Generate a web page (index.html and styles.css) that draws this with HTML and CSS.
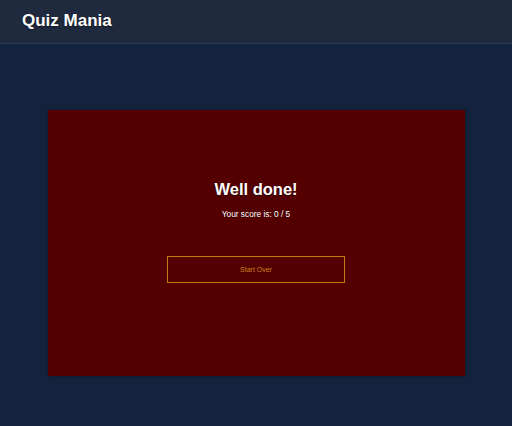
FILE: index.html
```html
<!DOCTYPE html>
<html>
<head>
<meta charset="utf-8">
<link rel="stylesheet" href="styles.css">
</head>
<body>
<header class="topbar"><h1 class="brand">Quiz Mania</h1></header>
<main class="main">
  <section class="card">
    <h2 class="result-title">Well done!</h2>
    <p class="score">Your score is: 0 / 5</p>
    <button class="restart">Start Over</button>
  </section>
</main>
</body>
</html>
```
FILE: styles.css
```css
html, body { margin: 0; padding: 0; }
body {
  background: #13223d;
  font-family: "Liberation Sans", Arial, sans-serif;
  color: #fff;
  width: 512px;
  height: 426px;
  overflow: hidden;
}
.topbar {
  height: 43px;
  background: #1f2a3e;
  border-bottom: 1px solid #2a3852;
  display: flex;
  align-items: center;
  padding-left: 22px;
  box-sizing: content-box;
}
.brand {
  margin: 0;
  font-size: 17px;
  font-weight: bold;
  line-height: 22px;
  padding-bottom: 1px;
  text-shadow: 0 1px 2px rgba(0,0,0,0.5);
}
.main {
  display: flex;
  justify-content: center;
  padding-top: 66px;
}
.card {
  width: 417px;
  height: 266px;
  box-sizing: border-box;
  background: #550000;
  box-shadow: 0 0 3px rgba(0,0,0,0.35);
  display: flex;
  flex-direction: column;
  align-items: center;
  padding-top: 68px;
}
.result-title {
  margin: 0;
  font-size: 16.5px;
  line-height: 22px;
  font-weight: bold;
  text-shadow: 0 1px 2px rgba(0,0,0,0.5);
}
.score {
  margin: 9px 0 0;
  font-size: 8.3px;
  line-height: 11px;
  text-shadow: 0 1px 1px rgba(0,0,0,0.4);
}
.restart {
  margin-top: 36px;
  width: 178px;
  height: 27px;
  background: transparent;
  border: 1px solid #c47a14;
  color: #c9801c;
  font-family: "Liberation Sans", Arial, sans-serif;
  font-size: 7px;
  padding: 0;
}
```
